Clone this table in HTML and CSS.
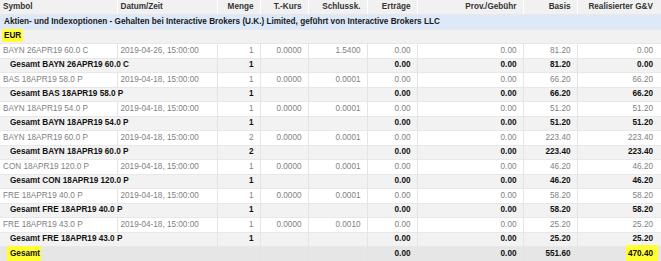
FILE: index.html
```html
<!DOCTYPE html>
<html lang="de">
<head>
<meta charset="utf-8">
<title>Realisierte G&amp;V</title>
<link rel="stylesheet" href="styles.css">
</head>
<body>
<table class="report">
  <colgroup>
    <col class="c-sym"><col class="c-date"><col class="c-qty"><col class="c-tk"><col class="c-sk"><col class="c-er"><col class="c-prov"><col class="c-basis"><col class="c-gv">
  </colgroup>
  <thead>
    <tr class="head">
      <th class="l">Symbol</th><th class="l">Datum/Zeit</th><th>Menge</th><th>T.-Kurs</th><th>Schlussk.</th><th>Erträge</th><th>Prov./Gebühr</th><th>Basis</th><th>Realisierter G&amp;V</th>
    </tr>
  </thead>
  <tbody>
    <tr class="section"><td class="l" colspan="9">Aktien- und Indexoptionen - Gehalten bei Interactive Brokers (U.K.) Limited, geführt von Interactive Brokers LLC</td></tr>
    <tr class="currency"><td class="l" colspan="9"><span class="hl">EUR</span></td></tr>

    <tr class="row"><td class="l">BAYN 26APR19 60.0 C</td><td class="l">2019-04-26, 15:00:00</td><td>1</td><td>0.0000</td><td>1.5400</td><td>0.00</td><td>0.00</td><td>81.20</td><td>0.00</td></tr>
    <tr class="sub"><td class="l ind" colspan="2">Gesamt BAYN 26APR19 60.0 C</td><td>1</td><td></td><td></td><td>0.00</td><td>0.00</td><td>81.20</td><td>0.00</td></tr>

    <tr class="row"><td class="l">BAS 18APR19 58.0 P</td><td class="l">2019-04-18, 15:00:00</td><td>1</td><td>0.0000</td><td>0.0001</td><td>0.00</td><td>0.00</td><td>66.20</td><td>66.20</td></tr>
    <tr class="sub"><td class="l ind" colspan="2">Gesamt BAS 18APR19 58.0 P</td><td>1</td><td></td><td></td><td>0.00</td><td>0.00</td><td>66.20</td><td>66.20</td></tr>

    <tr class="row"><td class="l">BAYN 18APR19 54.0 P</td><td class="l">2019-04-18, 15:00:00</td><td>1</td><td>0.0000</td><td>0.0001</td><td>0.00</td><td>0.00</td><td>51.20</td><td>51.20</td></tr>
    <tr class="sub"><td class="l ind" colspan="2">Gesamt BAYN 18APR19 54.0 P</td><td>1</td><td></td><td></td><td>0.00</td><td>0.00</td><td>51.20</td><td>51.20</td></tr>

    <tr class="row"><td class="l">BAYN 18APR19 60.0 P</td><td class="l">2019-04-18, 15:00:00</td><td>2</td><td>0.0000</td><td>0.0001</td><td>0.00</td><td>0.00</td><td>223.40</td><td>223.40</td></tr>
    <tr class="sub"><td class="l ind" colspan="2">Gesamt BAYN 18APR19 60.0 P</td><td>2</td><td></td><td></td><td>0.00</td><td>0.00</td><td>223.40</td><td>223.40</td></tr>

    <tr class="row"><td class="l">CON 18APR19 120.0 P</td><td class="l">2019-04-18, 15:00:00</td><td>1</td><td>0.0000</td><td>0.0001</td><td>0.00</td><td>0.00</td><td>46.20</td><td>46.20</td></tr>
    <tr class="sub"><td class="l ind" colspan="2">Gesamt CON 18APR19 120.0 P</td><td>1</td><td></td><td></td><td>0.00</td><td>0.00</td><td>46.20</td><td>46.20</td></tr>

    <tr class="row"><td class="l">FRE 18APR19 40.0 P</td><td class="l">2019-04-18, 15:00:00</td><td>1</td><td>0.0000</td><td>0.0001</td><td>0.00</td><td>0.00</td><td>58.20</td><td>58.20</td></tr>
    <tr class="sub"><td class="l ind" colspan="2">Gesamt FRE 18APR19 40.0 P</td><td>1</td><td></td><td></td><td>0.00</td><td>0.00</td><td>58.20</td><td>58.20</td></tr>

    <tr class="row"><td class="l">FRE 18APR19 43.0 P</td><td class="l">2019-04-18, 15:00:00</td><td>1</td><td>0.0000</td><td>0.0010</td><td>0.00</td><td>0.00</td><td>25.20</td><td>25.20</td></tr>
    <tr class="sub"><td class="l ind" colspan="2">Gesamt FRE 18APR19 43.0 P</td><td>1</td><td></td><td></td><td>0.00</td><td>0.00</td><td>25.20</td><td>25.20</td></tr>

    <tr class="total"><td class="l ind" colspan="2"><span class="hl">Gesamt</span></td><td></td><td></td><td></td><td>0.00</td><td>0.00</td><td>551.60</td><td><span class="hl">470.40</span></td></tr>
  </tbody>
</table>
</body>
</html>
```

FILE: styles.css
```css
html, body {
  margin: 0;
  padding: 0;
  background: #ffffff;
}

.report {
  width: 661px;
  border-collapse: collapse;
  table-layout: fixed;
  font-family: "Liberation Sans", Arial, sans-serif;
  font-size: 8.2px;
  color: #7a7a7a;
}

.c-sym { width: 117px; }
.c-date { width: 100px; }
.c-qty { width: 43px; }
.c-tk { width: 48px; }
.c-sk { width: 59px; }
.c-er { width: 50px; }
.c-prov { width: 106px; }
.c-basis { width: 54px; }
.c-gv { width: 84px; }

.report th,
.report td {
  height: 14.5px;
  padding: 0 6px 0 3px;
  line-height: 10px;
  text-align: right;
  white-space: nowrap;
  overflow: visible;
  border-left: 1px solid #e4e4e4;
  border-bottom: 1px solid #e8e8e8;
  box-sizing: border-box;
}

.report th:last-child,
.report td:last-child {
  padding-right: 8px;
}

.report th:first-child,
.report td:first-child {
  border-left: none;
}

.report .l {
  text-align: left;
}

.head th {
  background: #f1f1f1;
  color: #333333;
  font-weight: bold;
  border-left-color: #ffffff;
}

.section td {
  background: #dde9f8;
  color: #1a1a1a;
  font-weight: bold;
  padding-left: 4px;
}

.currency td {
  background: #f1f1f1;
  color: #111111;
  font-weight: bold;
  padding-left: 3px;
}

.row td {
  background: #ffffff;
  color: #7f7f7f;
  padding-left: 3px;
}

.sub td {
  background: #f2f2f2;
  color: #111111;
  font-weight: bold;
}

.total td {
  background: #e6e6e6;
  color: #111111;
  font-weight: bold;
}

.ind {
  padding-left: 10px !important;
}

.hl {
  background: #ffff33;
  padding: 2px 2px;
  margin-left: -1px;
}

.total .hl {
  padding: 3px 1px 3px 3px;
  margin-left: -3px;
}

.total td:last-child .hl {
  padding: 4px 5px 4px 2px;
  margin-right: -5px;
  margin-left: 0;
}
```
